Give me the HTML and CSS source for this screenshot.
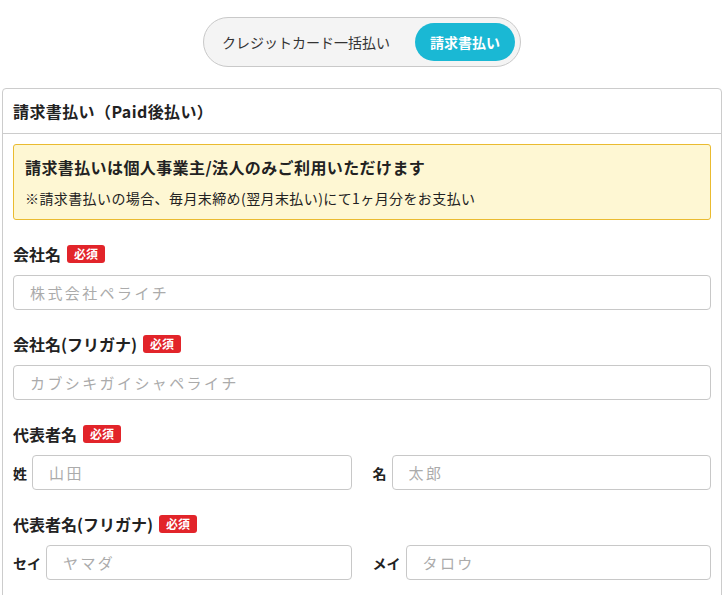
FILE: index.html
```html
<!DOCTYPE html>
<html lang="ja">
<head>
  <meta charset="UTF-8" />
  <title>お支払い方法</title>
  <meta name="viewport" content="width=device-width, initial-scale=1.0"/>
  <link rel="stylesheet" href="styles.css">
</head>
<body>

  <div class="pay-toggle">
    <button class="toggle-btn">クレジットカード一括払い</button>
    <button class="toggle-btn active">請求書払い</button>
  </div>

  <div class="card">
    <div class="card-header">請求書払い（Paid後払い）</div>

    <div class="card-body">
      <div class="notice">
        <p class="notice-title">請求書払いは個人事業主/法人のみご利用いただけます</p>
        <p class="notice-text">※請求書払いの場合、毎月末締め(翌月末払い)にて1ヶ月分をお支払い</p>
      </div>

      <div class="field">
        <label class="field-label">会社名<span class="required">必須</span></label>
        <input type="text" class="text-input" placeholder="株式会社ペライチ">
      </div>

      <div class="field">
        <label class="field-label">会社名(フリガナ)<span class="required">必須</span></label>
        <input type="text" class="text-input" placeholder="カブシキガイシャペライチ">
      </div>

      <div class="field">
        <label class="field-label">代表者名<span class="required">必須</span></label>
        <div class="name-row">
          <div class="name-col">
            <span class="sub-label">姓</span>
            <input type="text" class="text-input" placeholder="山田">
          </div>
          <div class="name-col">
            <span class="sub-label">名</span>
            <input type="text" class="text-input" placeholder="太郎">
          </div>
        </div>
      </div>

      <div class="field">
        <label class="field-label">代表者名(フリガナ)<span class="required">必須</span></label>
        <div class="name-row">
          <div class="name-col">
            <span class="sub-label">セイ</span>
            <input type="text" class="text-input" placeholder="ヤマダ">
          </div>
          <div class="name-col">
            <span class="sub-label">メイ</span>
            <input type="text" class="text-input" placeholder="タロウ">
          </div>
        </div>
      </div>
    </div>
  </div>

</body>
</html>
```

FILE: styles.css
```css
body {
  margin: 0;
  padding: 17px 4px 0 2px;
  font-family: "Noto Sans CJK JP", "Noto Sans", sans-serif;
  color: #222;
  background-color: #fff;
}

p {
  margin: 0;
}

.pay-toggle {
  display: flex;
  gap: 5px;
  width: fit-content;
  margin: 0 auto 21px;
  padding: 5px;
  border: 1px solid #c9c9c9;
  border-radius: 26px;
  background-color: #f4f4f4;
}

.toggle-btn {
  height: 38px;
  padding: 0 20px 0 13px;
  font-family: inherit;
  font-size: 14px;
  color: #333;
  background: none;
  border: none;
  border-radius: 19px;
  cursor: pointer;
}

.toggle-btn.active {
  width: 100px;
  padding: 0;
  color: #fff;
  font-weight: bold;
  background-color: #1ab8d4;
}

.card {
  border: 1px solid #cccccc;
  border-radius: 4px;
}

.card-header {
  height: 44px;
  line-height: 44px;
  padding: 0 10px;
  font-size: 16px;
  font-weight: bold;
  letter-spacing: 0.4px;
  border-bottom: 1px solid #cccccc;
}

.card-body {
  padding: 10px 10px 0;
}

.notice {
  padding: 11px 11px 11px;
  background-color: #fef7d3;
  border: 1px solid #eabb30;
  border-radius: 3px;
  margin-bottom: 23px;
}

.notice-title {
  font-size: 16px;
  font-weight: bold;
  line-height: 22px;
  letter-spacing: 0.4px;
  margin-bottom: 10px;
}

.notice-text {
  font-size: 14px;
  line-height: 20px;
  letter-spacing: 0.4px;
}

.field {
  margin-bottom: 23px;
}

.field-label {
  display: flex;
  align-items: center;
  height: 22px;
  font-size: 16px;
  font-weight: bold;
  margin-bottom: 10px;
}

.required {
  display: inline-block;
  margin-left: 6px;
  padding: 0 7px;
  height: 18px;
  line-height: 18px;
  font-size: 12px;
  font-weight: bold;
  color: #fff;
  background-color: #e2242a;
  border-radius: 3px;
}

.text-input {
  display: block;
  box-sizing: border-box;
  width: 100%;
  height: 35px;
  padding: 0 16px;
  font-family: inherit;
  font-size: 15px;
  letter-spacing: 2.4px;
  color: #222;
  border: 1px solid #c8c8c8;
  border-radius: 4px;
  outline: none;
}

.text-input::placeholder {
  color: #ababab;
}

.name-row {
  display: flex;
  gap: 21px;
}

.name-col {
  flex: 1;
  display: flex;
  align-items: center;
  gap: 5px;
}

.sub-label {
  flex-shrink: 0;
  font-size: 14px;
  font-weight: bold;
}
```
